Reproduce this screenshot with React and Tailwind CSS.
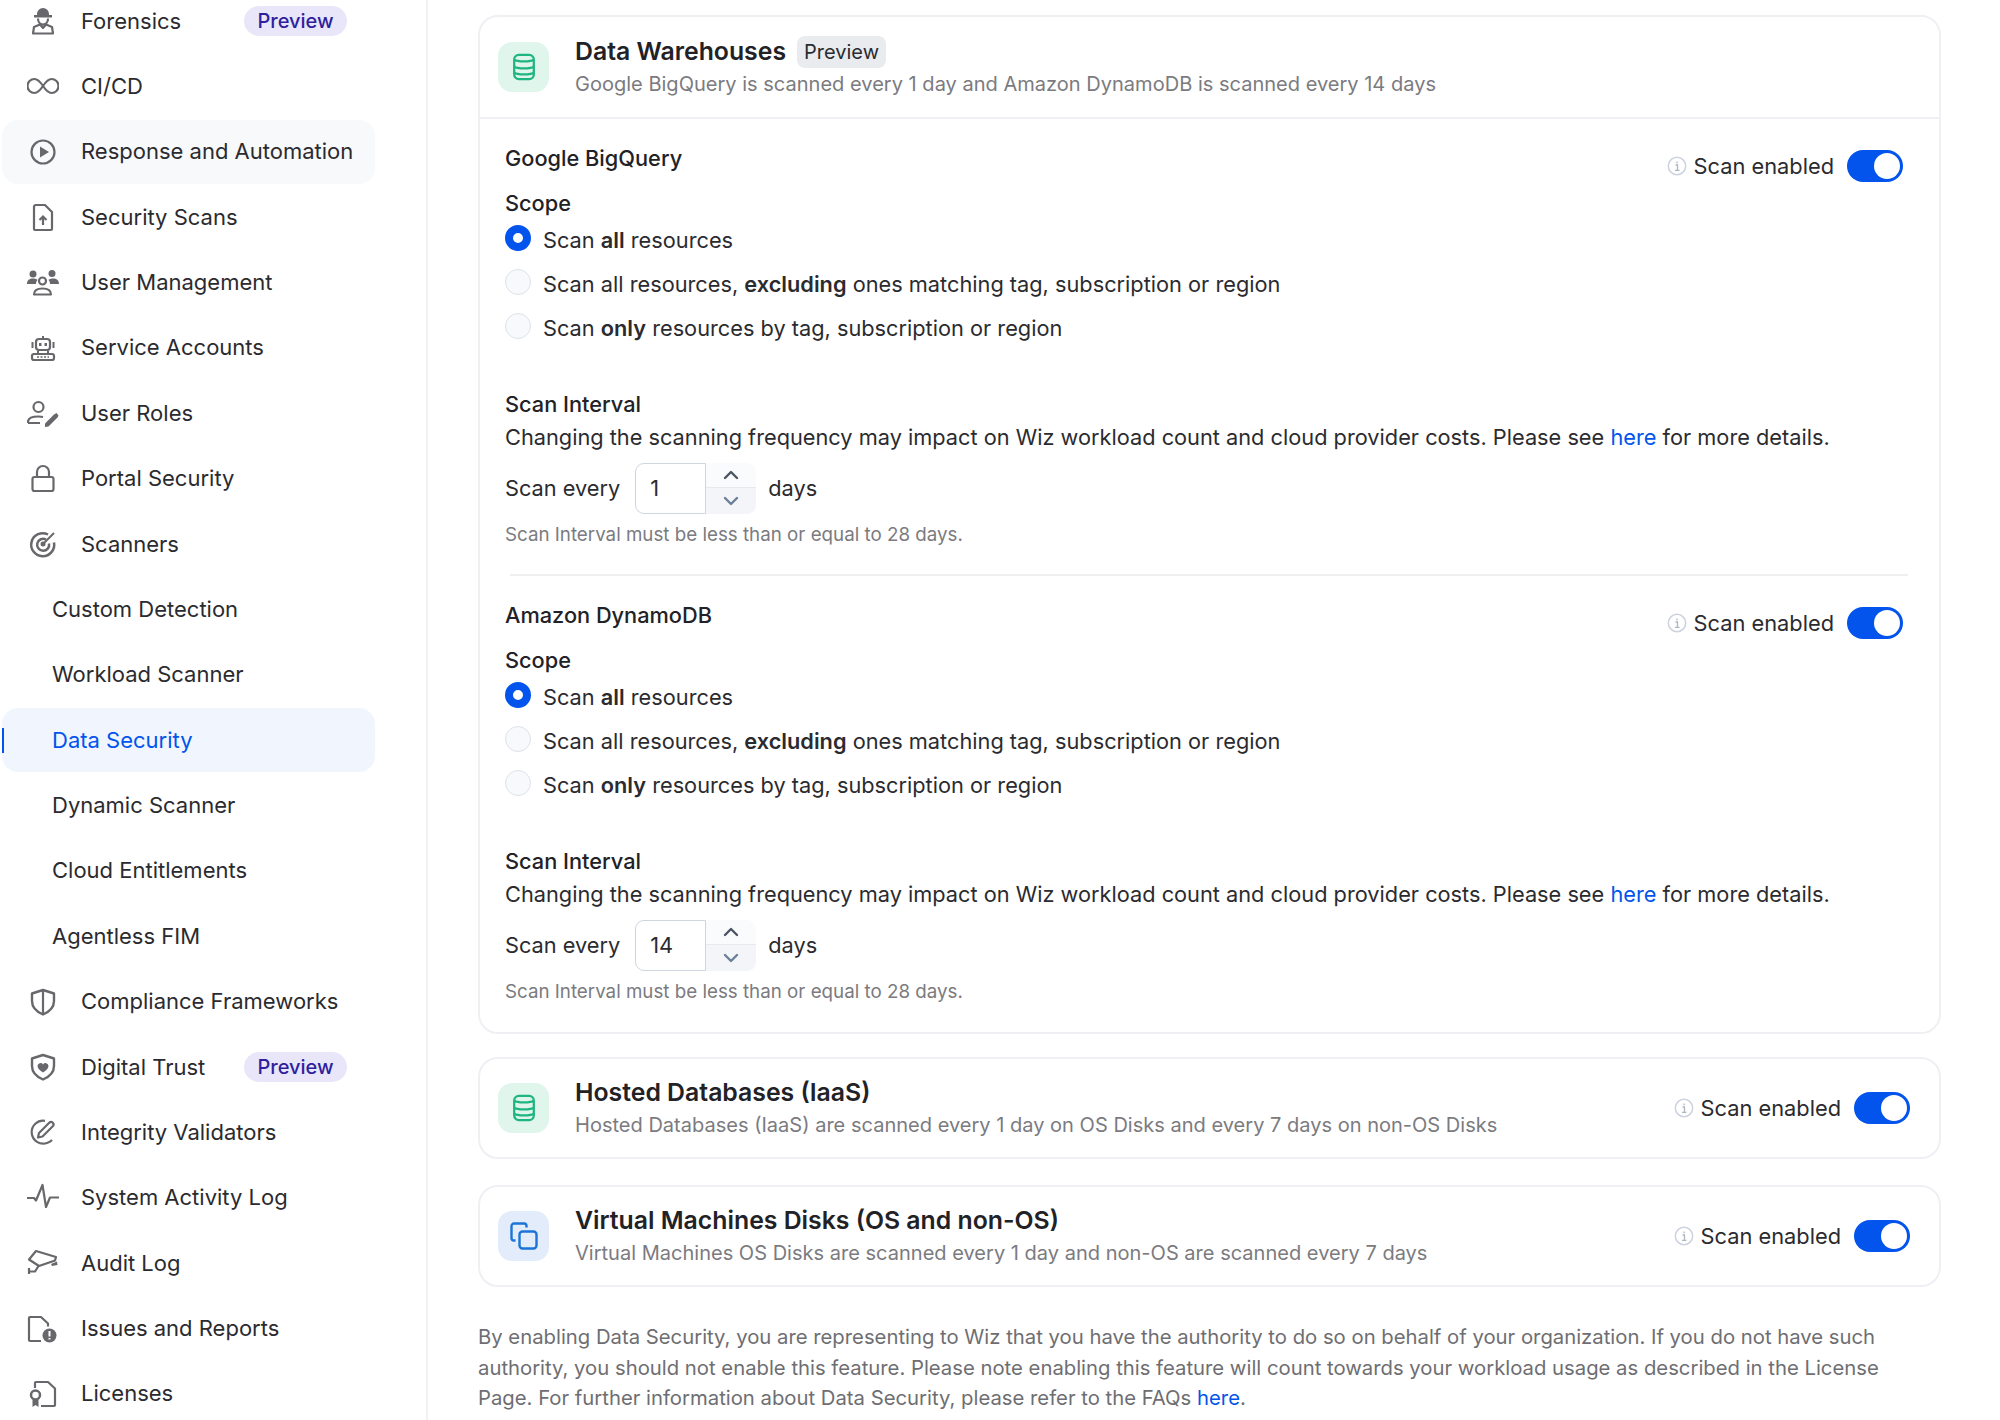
import { ChevronUp, ChevronDown } from "lucide-react";

const GRAY = "#68686c";

// sidebar icons, drawn on a 32 grid
const ICONS = {
    forensics: (
        <>
            <path d="M10 9a6 6 0 0 1 12 0v1h3v2.500H7V10h3z" fill={GRAY} />
            <path d="M11 13.500c0 3.500 2 6 5 6s5-2.500 5-6M6 28.500l1-6.500 6-2.500 3 3.500 3-3.500 6 2.500 1 6.500z" fill="none" stroke={GRAY} strokeWidth="2.200" strokeLinejoin="round" />
        </>
    ),
    infinity: (
        <path d="M16 16c-3-4.500-5-7-8.500-7a7 7 0 0 0 0 14c3.500 0 5.500-2.500 8.500-7 3-4.500 5-7 8.500-7a7 7 0 0 1 0 14c-3.500 0-5.500-2.500-8.500-7z" fill="none" stroke={GRAY} strokeWidth="2.200" />
    ),
    play: (
        <>
            <circle cx="16" cy="16" r="11.500" fill="none" stroke={GRAY} strokeWidth="2.200" />
            <path d="M13 10.500 22 16l-9 5.500z" fill={GRAY} />
        </>
    ),
    fileUp: (
        <>
            <path d="M7 6a2 2 0 0 1 2-2h9l7 7v17a1 1 0 0 1-1 1H8a1 1 0 0 1-1-1z" fill="none" stroke={GRAY} strokeWidth="2.200" strokeLinejoin="round" />
            <path d="M16 24v-8M12.500 19l3.500-3.500 3.500 3.500" fill="none" stroke={GRAY} strokeWidth="2.200" />
        </>
    ),
    users: (
        <>
            <circle cx="6" cy="7" r="3.500" fill={GRAY} />
            <circle cx="25" cy="6.500" r="3.500" fill={GRAY} />
            <path d="M0 17c0-4 2.500-5.500 6-5.500 2 0 3.500.500 4.500 1.500-1 .8-1.500 2.500-1.500 4zM32 17c0-4-2.500-5.500-6-5.500-2 0-3.500.500-4.500 1.500 1 .8 1.500 2.500 1.500 4z" fill={GRAY} />
            <circle cx="15.500" cy="14" r="3.500" fill="none" stroke={GRAY} strokeWidth="2.200" />
            <path d="M7 27.500c0-4 3-6 8.500-6s8.500 2 8.500 6z" fill="none" stroke={GRAY} strokeWidth="2.200" strokeLinejoin="round" />
        </>
    ),
    robot: (
        <>
            <path d="M16 4v3" stroke={GRAY} strokeWidth="2" />
            <rect x="9" y="7" width="14" height="11" rx="3" fill="none" stroke={GRAY} strokeWidth="2.200" />
            <rect x="12" y="11" width="2.500" height="3" fill={GRAY} />
            <rect x="17.500" y="11" width="2.500" height="3" fill={GRAY} />
            <path d="M5.500 10v6M26.500 10v6M11 18.500v3M21 18.500v3" stroke={GRAY} strokeWidth="2" />
            <rect x="5" y="22" width="22" height="6" rx="2" fill="none" stroke={GRAY} strokeWidth="2.200" />
            <path d="M10 25h12" stroke={GRAY} strokeWidth="1.500" strokeDasharray="2 1.500" />
        </>
    ),
    userPen: (
        <>
            <circle cx="11.500" cy="10" r="5" fill="none" stroke={GRAY} strokeWidth="2.200" />
            <path d="M1 26v-1c0-3.500 4-5.500 10.500-5.500 1.500 0 3 .1 4.500.5M1 26h12" fill="none" stroke={GRAY} strokeWidth="2.200" strokeLinejoin="round" />
            <path d="m18 26.500 9-9 2.500-1.500 2 2.500-1 2-9 9-3.500.500z" fill={GRAY} />
        </>
    ),
    lock: (
        <>
            <path d="M10 14V9a6 6 0 0 1 12 0v5" fill="none" stroke={GRAY} strokeWidth="2.200" />
            <rect x="5.500" y="14" width="21" height="14" rx="2" fill="none" stroke={GRAY} strokeWidth="2.200" />
        </>
    ),
    target: (
        <>
            <path d="M21 6.500A11.500 11.500 0 1 0 27 14.500" fill="none" stroke={GRAY} strokeWidth="2.500" />
            <path d="M19 11.500a6 6 0 1 0 3 4" fill="none" stroke={GRAY} strokeWidth="2.500" />
            <circle cx="16" cy="16" r="2.500" fill={GRAY} />
            <path d="m16 16 11-11" stroke={GRAY} strokeWidth="2" />
        </>
    ),
    shield: (
        <>
            <path d="M16 4 27 7.500V15c0 6-4 10.500-11 13.500C9 25.500 5 21 5 15V7.500z" fill="none" stroke={GRAY} strokeWidth="2.400" strokeLinejoin="round" />
            <path d="M16 4v24.500" stroke={GRAY} strokeWidth="2.200" />
        </>
    ),
    shieldHeart: (
        <>
            <path d="M16 4 27 7.500V15c0 6-4 10.500-11 13.500C9 25.500 5 21 5 15V7.500z" fill="none" stroke={GRAY} strokeWidth="2.400" strokeLinejoin="round" />
            <path d="M16 21.500c-3-2-5.500-4-5.500-6.500a3 3 0 0 1 5.500-1.500 3 3 0 0 1 5.500 1.500c0 2.500-2.500 4.500-5.500 6.500z" fill={GRAY} />
        </>
    ),
    pencilCircle: (
        <>
            <path d="M18 4.800A11.500 11.500 0 1 0 20 27c2-.7 4-1.800 5-3" fill="none" stroke={GRAY} strokeWidth="2.200" />
            <path d="M11 21.500l1-4.500 10.500-10.500a2.500 2.500 0 0 1 3.500 3.500L15.500 20.500z" fill="none" stroke={GRAY} strokeWidth="2.200" strokeLinejoin="round" />
        </>
    ),
    activity: (
        <path d="M0 16h7l2 2.500L15.500 3l3.500 22 4-9.500h9" fill="none" stroke={GRAY} strokeWidth="2.200" strokeLinejoin="round" />
    ),
    camera: (
        <>
            <path d="M9 4 29 10l-1 3.500-16 5.500-10-6.500z" fill="none" stroke={GRAY} strokeWidth="2.200" strokeLinejoin="round" />
            <path d="m24 17 6-2.500 .5 3.500-5.500 1z" fill={GRAY} />
            <path d="M2 27v-6M2 24.500h6l3.500-5.500" fill="none" stroke={GRAY} strokeWidth="2.200" />
        </>
    ),
    fileAlert: (
        <>
            <path d="M14 28H3a1 1 0 0 1-1-1V5a1 1 0 0 1 1-1h11l7 6.500v3" fill="none" stroke={GRAY} strokeWidth="2.200" strokeLinejoin="round" />
            <circle cx="22.500" cy="22.500" r="7" fill={GRAY} />
            <path d="M22.500 18v5.500M22.500 25v1.500" stroke="#fff" strokeWidth="2" />
        </>
    ),
    license: (
        <>
            <path d="M8 10V5a1 1 0 0 1 1-1h12l7 6.500V27a1 1 0 0 1-1 1H14" fill="none" stroke={GRAY} strokeWidth="2.200" strokeLinejoin="round" />
            <circle cx="8.500" cy="17" r="4.500" fill="none" stroke={GRAY} strokeWidth="2.500" />
            <path d="M5.500 21.500V29l3-2 3 2v-7.500z" fill={GRAY} />
        </>
    ),
};

const NAV_ITEMS = [
    { label: "Forensics", icon: "forensics", preview: true },
    { label: "CI/CD", icon: "infinity" },
    { label: "Response and Automation", icon: "play", hover: true },
    { label: "Security Scans", icon: "fileUp" },
    { label: "User Management", icon: "users" },
    { label: "Service Accounts", icon: "robot" },
    { label: "User Roles", icon: "userPen" },
    { label: "Portal Security", icon: "lock" },
    { label: "Scanners", icon: "target" },
    { label: "Custom Detection" },
    { label: "Workload Scanner" },
    { label: "Data Security", active: true },
    { label: "Dynamic Scanner" },
    { label: "Cloud Entitlements" },
    { label: "Agentless FIM" },
    { label: "Compliance Frameworks", icon: "shield" },
    { label: "Digital Trust", icon: "shieldHeart", preview: true },
    { label: "Integrity Validators", icon: "pencilCircle" },
    { label: "System Activity Log", icon: "activity" },
    { label: "Audit Log", icon: "camera" },
    { label: "Issues and Reports", icon: "fileAlert" },
    { label: "Licenses", icon: "license" },
];

function NavRow({ item }) {
    const bg = item.active ? "bg-[#f1f6fe] text-[#0254ec]" : item.hover ? "bg-[#f8f9fb] text-[#2b2b2f]" : "text-[#2b2b2f]";
    return (
        <div className={`relative flex items-center h-[64px] mb-[1.38px] rounded-[16px] text-[22px] ${bg}`}>
            {item.active && <span className="absolute left-0 top-[20px] w-[2px] h-[25px] bg-[#0254ec]" />}
            {item.icon ? (
                <>
                    <svg viewBox="0 0 32 32" className="w-[32px] h-[32px] ml-[25px] mr-[22px] shrink-0">
                        {ICONS[item.icon]}
                    </svg>
                    <span>{item.label}</span>
                </>
            ) : (
                <span className="ml-[50px]">{item.label}</span>
            )}
            {item.preview && (
                <span className="absolute left-[242px] top-[17px] w-[103px] h-[30px] rounded-full bg-[#e8e6f8] text-[#2f1f9e] text-[20px] font-medium flex items-center justify-center">
                    Preview
                </span>
            )}
        </div>
    );
}

function DatabaseIcon() {
    return (
        <svg viewBox="0 0 24 30" className="w-[24px] h-[28px]" fill="none" stroke="#1fb57f" strokeWidth="2.400">
            <rect x="1.500" y="2" width="21" height="26" rx="5" />
            <path d="M1.500 7c3 2.500 18 2.500 21 0M1.500 14.500c3 2.500 18 2.500 21 0M1.500 21c3 2.500 18 2.500 21 0" />
        </svg>
    );
}

function CopyIcon() {
    return (
        <svg viewBox="0 0 28 28" className="w-[28px] h-[28px]" fill="none" stroke="#1b74d8" strokeWidth="2.400">
            <rect x="9.500" y="9.500" width="17" height="17" rx="3" />
            <path d="M5.500 18.500H4a2.500 2.500 0 0 1-2.500-2.500V4A2.500 2.500 0 0 1 4 1.500h10A2.500 2.500 0 0 1 16.500 4v1.500" />
        </svg>
    );
}

function ScanEnabled() {
    return (
        <div className="flex items-center">
            <svg viewBox="0 0 20 20" className="w-[20px] h-[20px] mr-[7px]">
                <circle cx="10" cy="10" r="8.700" fill="none" stroke="#ccd3de" strokeWidth="1.500" />
                <path d="M8.500 9h2v5M8 14.300h4.500M10 5.500v1.800" fill="none" stroke="#aeb6c2" strokeWidth="1.300" />
            </svg>
            <span className="text-[21.800px] leading-[30px] text-[#2b2b2f]">Scan enabled</span>
            <span className="ml-[13px] w-[56px] h-[32px] rounded-full bg-[#0254ec] flex items-center justify-end pr-[3px]">
                <span className="w-[26px] h-[26px] rounded-full bg-white" />
            </span>
        </div>
    );
}

function Radio({ checked, children }) {
    return (
        <div className="flex items-center h-[44px] text-[#2b2b2f]">
            {checked ? (
                <span className="w-[26px] h-[26px] mb-[4px] rounded-full border-[8px] border-[#0254ec] bg-white shrink-0" />
            ) : (
                <span className="w-[26px] h-[26px] mb-[4px] rounded-full border border-[#dde2ea] bg-[#f8f9fc] shrink-0" />
            )}
            <span className="ml-[12px]">{children}</span>
        </div>
    );
}

function ScanSection({ name, days }) {
    return (
        <div className="px-[25px] pt-[24px]">
            <div className="flex justify-between items-start pr-[11px]">
                <div className="font-medium leading-[30px] text-[#222226]">{name}</div>
                <div className="mt-[7px]">
                    <ScanEnabled />
                </div>
            </div>
            <div className="mt-[6px] font-medium leading-[30px] text-[#222226]">Scope</div>
            <Radio checked>
                Scan <b className="font-semibold">all</b> resources
            </Radio>
            <Radio>
                Scan all resources, <b className="font-semibold">excluding</b> ones matching tag, subscription or region
            </Radio>
            <Radio>
                Scan <b className="font-semibold">only</b> resources by tag, subscription or region
            </Radio>
            <div className="mt-[39px] font-medium leading-[30px] text-[#222226]">Scan Interval</div>
            <div className="mt-[3px] leading-[30px] text-[#2b2b2f]">
                Changing the scanning frequency may impact on Wiz workload count and cloud provider costs. Please see{" "}
                <span className="text-[#0254ec]">here</span> for more details.
            </div>
            <div className="mt-[11px] flex items-center text-[#2b2b2f]">
                <span>Scan every</span>
                <div className="ml-[15px] flex w-[121px] h-[51px]">
                    <div className="w-[71px] border border-[#ced5df] rounded-l-[9px] flex items-center pl-[14px]">{days}</div>
                    <div className="w-[50px] flex flex-col">
                        <div className="h-[25px] bg-[#fafbfc] rounded-tr-[9px] border-b border-[#e6e9ee] flex items-center justify-center">
                            <ChevronUp size={24} strokeWidth={2.400} color="#4b5563" />
                        </div>
                        <div className="h-[26px] bg-[#f3f5f8] rounded-br-[9px] flex items-center justify-center">
                            <ChevronDown size={24} strokeWidth={2.400} color="#6a7f99" />
                        </div>
                    </div>
                </div>
                <span className="ml-[12px]">days</span>
            </div>
            <div className="mt-[6px] leading-[30px] text-[18.750px] text-[#7b7b7f]">Scan Interval must be less than or equal to 28 days.</div>
        </div>
    );
}

function CardHeader({ tile, icon, title, tag, sub, right }) {
    return (
        <div className="flex items-center pl-[18px] pr-[29px] h-full">
            <div className={`w-[51px] h-[50px] rounded-[14px] flex items-center justify-center shrink-0 ${tile}`}>{icon}</div>
            <div className="ml-[26px] grow">
                <div className="flex items-center h-[32px] mb-[1px]">
                    <span className="text-[24.800px] font-semibold text-[#222226]">{title}</span>
                    {tag && (
                        <span className="ml-[11px] h-[32px] w-[89px] rounded-[8px] bg-[#e9ebee] text-[20px] text-[#2b2b2f] flex items-center justify-center">
                            Preview
                        </span>
                    )}
                </div>
                <div className="leading-[30px] text-[20.050px] text-[#7b7b7f]">{sub}</div>
            </div>
            {right}
        </div>
    );
}

export default function App() {
    return (
        <div className="flex h-[1420px] overflow-hidden bg-white text-[21.750px] font-[Inter,sans-serif]">
            <aside className="w-[428px] shrink-0 border-r-2 border-[#eff1f3] pl-[2px] pr-[51px] -mt-[11px]">
                {NAV_ITEMS.map((item) => (
                    <NavRow key={item.label} item={item} />
                ))}
            </aside>

            <main className="w-[1463px] ml-[50px] pt-[15px] shrink-0">
                <section className="border-2 border-[#eef0f4] rounded-[20px]">
                    <div className="h-[102px] border-b-2 border-[#eef0f4]">
                        <CardHeader
                            tile="bg-[#e0f5ec]"
                            icon={<DatabaseIcon />}
                            title="Data Warehouses"
                            tag
                            sub="Google BigQuery is scanned every 1 day and Amazon DynamoDB is scanned every 14 days"
                        />
                    </div>
                    <ScanSection name="Google BigQuery" days="1" />
                    <div className="mt-[24px] ml-[30px] mr-[31px] border-t-2 border-[#eeeff1]" />
                    <ScanSection name="Amazon DynamoDB" days="14" />
                    <div className="h-[25px]" />
                </section>

                <section className="mt-[23px] h-[102px] border-2 border-[#eef0f4] rounded-[20px]">
                    <CardHeader
                        tile="bg-[#e0f5ec]"
                        icon={<DatabaseIcon />}
                        title="Hosted Databases (IaaS)"
                        sub="Hosted Databases (IaaS) are scanned every 1 day on OS Disks and every 7 days on non-OS Disks"
                        right={<ScanEnabled />}
                    />
                </section>

                <section className="mt-[26px] h-[102px] border-2 border-[#eef0f4] rounded-[20px]">
                    <CardHeader
                        tile="bg-[#e2ecfa]"
                        icon={<CopyIcon />}
                        title="Virtual Machines Disks (OS and non-OS)"
                        sub="Virtual Machines OS Disks are scanned every 1 day and non-OS are scanned every 7 days"
                        right={<ScanEnabled />}
                    />
                </section>

                <p className="mt-[35px] text-[20.300px] leading-[30.600px] text-[#6e6e72]">
                    By enabling Data Security, you are representing to Wiz that you have the authority to do so on behalf of your organization. If you do not have such
                    <br />
                    authority, you should not enable this feature. Please note enabling this feature will count towards your workload usage as described in the License
                    <br />
                    Page. For further information about Data Security, please refer to the FAQs <span className="text-[#0254ec]">here</span>.
                </p>
            </main>
        </div>
    );
}
